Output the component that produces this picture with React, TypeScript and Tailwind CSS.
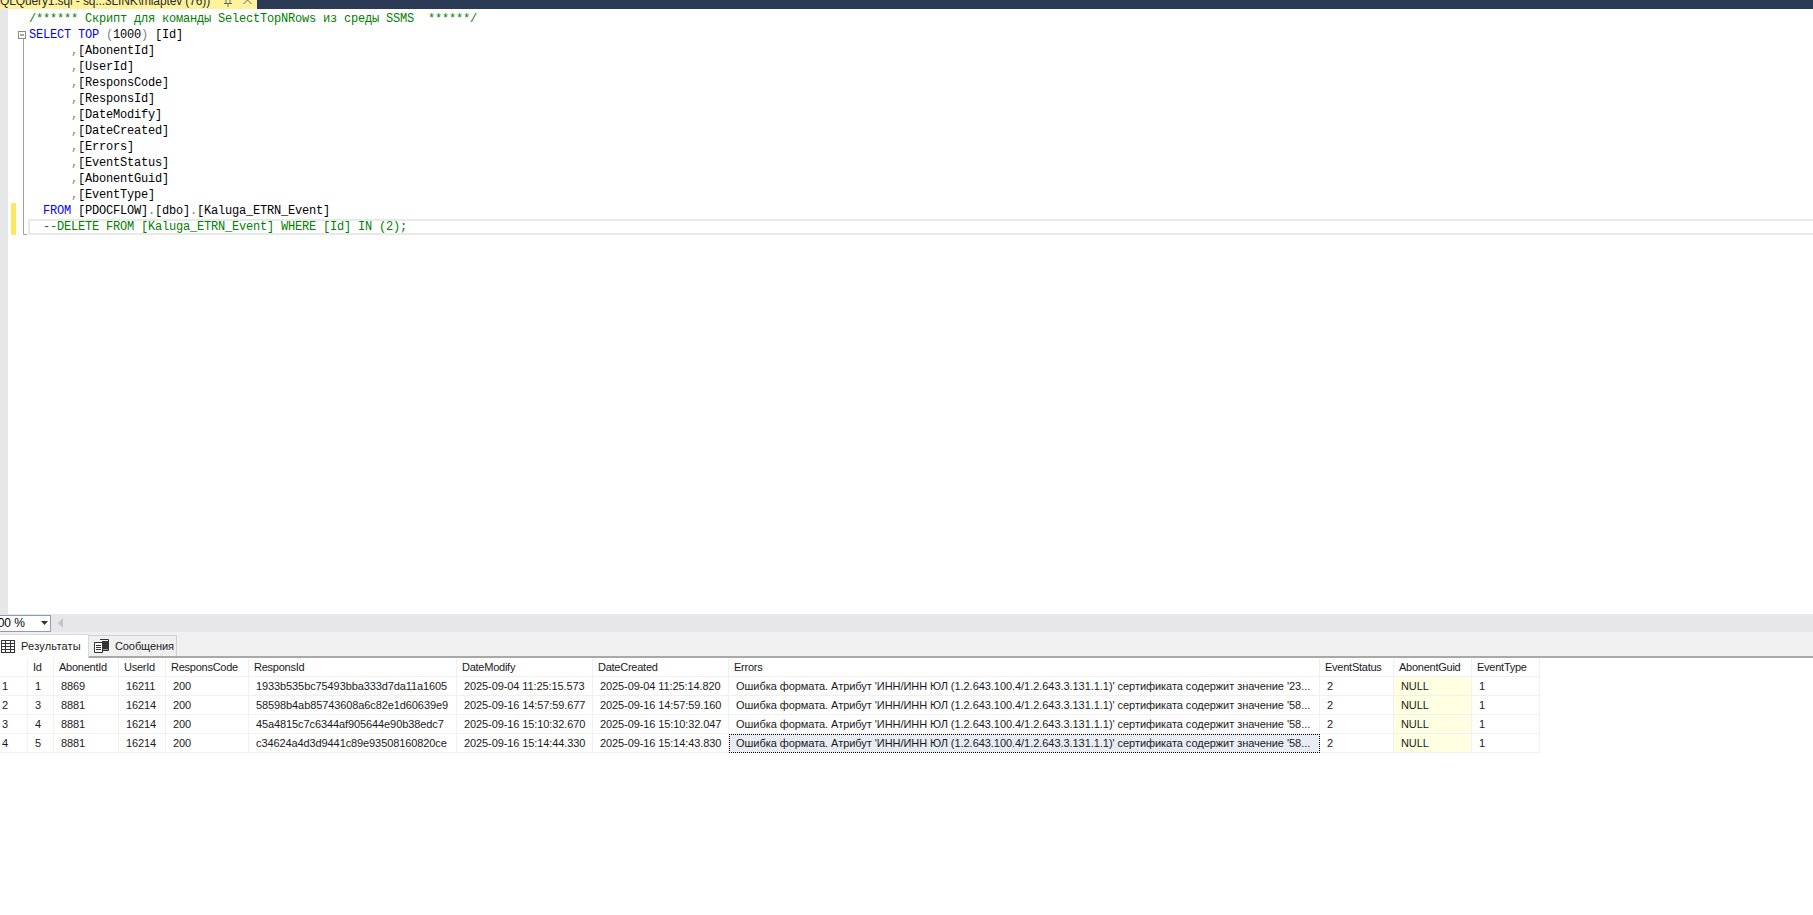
const keyword = "text-[#0000ff]";
const comment = "text-[#008000]";
const gray = "text-[#808080]";

type Part = [string, string?];

const columnLines = [
  "AbonentId",
  "UserId",
  "ResponsCode",
  "ResponsId",
  "DateModify",
  "DateCreated",
  "Errors",
  "EventStatus",
  "AbonentGuid",
  "EventType",
];

const codeLines: Part[][] = [
  [["/****** Скрипт для команды SelectTopNRows из среды SSMS  ******/", comment]],
  [["SELECT", keyword], [" "], ["TOP", keyword], [" "], ["(", gray], ["1000"], [")", gray], [" [Id]"]],
  ...columnLines.map((c): Part[] => [["      ,", gray], [`[${c}]`]]),
  [["  "], ["FROM", keyword], [" [PDOCFLOW]"], [".", gray], ["[dbo]"], [".", gray], ["[Kaluga_ETRN_Event]"]],
  [["  --DELETE FROM [Kaluga_ETRN_Event] WHERE [Id] IN (2);", comment]],
];

const ERR = "Ошибка формата. Атрибут 'ИНН/ИНН ЮЛ (1.2.643.100.4/1.2.643.3.131.1.1)' сертификата содержит значение ";

const headers = ["", "Id", "AbonentId", "UserId", "ResponsCode", "ResponsId", "DateModify", "DateCreated", "Errors", "EventStatus", "AbonentGuid", "EventType"];

const rows = [
  ["1", "1", "8869", "16211", "200", "1933b535bc75493bba333d7da11a1605", "2025-09-04 11:25:15.573", "2025-09-04 11:25:14.820", ERR + "'23...", "2", "NULL", "1"],
  ["2", "3", "8881", "16214", "200", "58598b4ab85743608a6c82e1d60639e9", "2025-09-16 14:57:59.677", "2025-09-16 14:57:59.160", ERR + "'58...", "2", "NULL", "1"],
  ["3", "4", "8881", "16214", "200", "45a4815c7c6344af905644e90b38edc7", "2025-09-16 15:10:32.670", "2025-09-16 15:10:32.047", ERR + "'58...", "2", "NULL", "1"],
  ["4", "5", "8881", "16214", "200", "c34624a4d3d9441c89e93508160820ce", "2025-09-16 15:14:44.330", "2025-09-16 15:14:43.830", ERR + "'58...", "2", "NULL", "1"],
];

function FoldMark({ line }: { line: number }) {
  if (line === 0) return null;
  if (line === 1) {
    return (
      <svg width="9" height="16" className="block">
        <rect x="0.5" y="4.5" width="7" height="7" fill="#fff" stroke="#8a8a8a" />
        <path d="M2 8h4" stroke="#555" />
        <path d="M5.5 12v4" stroke="#a0a0a0" />
      </svg>
    );
  }
  if (line === 13) {
    return (
      <svg width="9" height="16" className="block">
        <path d="M5.5 0v15.5H9" stroke="#a0a0a0" fill="none" />
      </svg>
    );
  }
  return (
    <svg width="9" height="16" className="block">
      <path d="M5.5 0v16" stroke="#a0a0a0" />
    </svg>
  );
}

function GridIcon() {
  return (
    <svg width="14" height="13" viewBox="0 0 14 13" className="block">
      <rect x="0.5" y="0.5" width="13" height="12" fill="#fff" stroke="#333" />
      <path d="M0 3.5h14M0 6.5h14M0 9.5h14M4.5 0v13M9.5 0v13" stroke="#333" />
    </svg>
  );
}

function MessagesIcon() {
  return (
    <svg width="15" height="14" viewBox="0 0 15 14" className="block">
      <path d="M6 0.5h8.5v11H9" fill="none" stroke="#333" />
      <path d="M8 2h6v8.5H8z" fill="#333" />
      <path d="M0.5 3.5h8v10h-8z" fill="#fff" stroke="#333" />
      <path d="M2 6.5h5M2 8.5h5M2 10.5h5" stroke="#333" />
    </svg>
  );
}

export default function App() {
  return (
    <div className="flex h-[915px] w-[1813px] flex-col overflow-hidden bg-white font-['Liberation_Sans',sans-serif] text-[11px] text-[#1a1a1a]">
      {/* document tab strip, cut by the top of the picture */}
      <div className="flex h-[9px] shrink-0 bg-[#2b3a55]">
        <div className="flex h-[9px] w-[257px] items-end justify-between overflow-hidden bg-[#fff29d] pr-[5px] text-[12px] leading-[15px] tracking-[-0.12px] text-[#2b2b2b]">
          <span className="whitespace-pre">QLQuery1.sql - sq...3LINK\mlaptev (76))</span>
          <span className="flex h-[9px] items-start gap-[11px]">
            <svg width="8" height="8" className="block">
              <path d="M2 0v3M6 0v3M0 3.5h8M4 4v3" stroke="#666" fill="none" />
            </svg>
            <svg width="9" height="8" className="block">
              <path d="M0.5 -4L8.5 4M8.5 -4L0.5 4" stroke="#666" fill="none" />
            </svg>
          </span>
        </div>
      </div>

      {/* editor */}
      <div className="flex min-h-0 flex-1 overflow-hidden">
        <div className="w-2 shrink-0 bg-[#e6e7e8]" />
        <div className="flex-1 overflow-hidden pt-[2px] font-['Liberation_Mono',monospace] text-[12px] leading-4 tracking-[-0.2px]">
          {codeLines.map((parts, i) => (
            <div key={i} className="flex h-4">
              <div className="w-[3px] shrink-0" />
              <div className={i >= 12 ? "w-[5px] shrink-0 bg-[#fce860]" : "w-[5px] shrink-0"} />
              <div className="w-[2px] shrink-0" />
              <div className="w-[9px] shrink-0">
                <FoldMark line={i} />
              </div>
              <div className="w-px shrink-0" />
              <div className={i === 13 ? "mr-[-4px] flex-1 whitespace-pre pl-px shadow-[inset_0_0_0_2px_#e9e9e9]" : "flex-1 whitespace-pre pl-px"}>
                {parts.map(([text, color], j) => (
                  <span key={j} className={color ?? "text-black"}>
                    {text}
                  </span>
                ))}
              </div>
            </div>
          ))}
        </div>
      </div>

      {/* zoom bar */}
      <div className="flex h-[18px] shrink-0 items-center bg-[#e6e7e8]">
        <div className="flex h-[17px] w-[51px] items-center justify-between overflow-hidden border border-l-0 border-[#8f9bb0] bg-white pr-[2px] text-[12px] text-black">
          <span className="ml-[-9px] whitespace-pre">100 %</span>
          <svg width="7" height="4" className="block">
            <path d="M0 0h7L3.5 4z" fill="#333" />
          </svg>
        </div>
        <svg width="5" height="10" className="ml-[7px] block">
          <path d="M5 0v10L0 5z" fill="#c4c4c8" />
        </svg>
      </div>

      {/* result tabs */}
      <div className="flex h-[26px] shrink-0 items-end border-b-2 border-[#a9a9a9] bg-[#f0f0f0]">
        <div className="mb-[-2px] flex h-[24px] w-[89px] items-center gap-[6px] border-r border-t border-[#d9d9d9] bg-white pb-px pl-px text-[11px] tracking-[0.2px]">
          <GridIcon />
          <span>Результаты</span>
        </div>
        <div className="flex h-[21px] w-[88px] items-center gap-[6px] border-r border-t border-[#d0d0d0] pl-[5px] text-[11px] tracking-[-0.1px]">
          <MessagesIcon />
          <span>Сообщения</span>
        </div>
      </div>

      {/* results grid */}
      <div className="grid w-[1540px] shrink-0 grid-cols-[28px_26px_65px_47px_83px_208px_136px_136px_591px_74px_78px_68px] grid-rows-[19px_19px_19px_19px_19px]">
        {headers.map((h) => (
          <div key={h || "corner"} className="flex items-center overflow-hidden whitespace-nowrap border-b border-r border-[#f0f0f0] bg-white pl-[5px] tracking-[-0.25px]">
            {h}
          </div>
        ))}
        {rows.map((row, r) =>
          row.map((value, c) => {
            const focused = r === 3 && c === 8;
            const isNull = value === "NULL";
            let cls = "flex items-center overflow-hidden whitespace-nowrap ";
            cls += c === 8 ? "tracking-[-0.05px] " : "tracking-[-0.1px] ";
            if (focused) cls += "border border-dotted border-black bg-[#e8edf3] pl-[6px]";
            else if (isNull) cls += "border-b border-r border-[#f0f0f0] bg-[#ffffe1] pl-[7px]";
            else cls += "border-b border-r border-[#f0f0f0] pl-[7px]";
            if (c === 0) cls = "flex items-center overflow-hidden whitespace-nowrap border-b border-r border-[#f0f0f0] pl-[2px]";
            return (
              <div key={`${r}-${c}`} className={cls}>
                {value}
              </div>
            );
          })
        )}
      </div>
      <div className="h-[162px] shrink-0" />
    </div>
  );
}
